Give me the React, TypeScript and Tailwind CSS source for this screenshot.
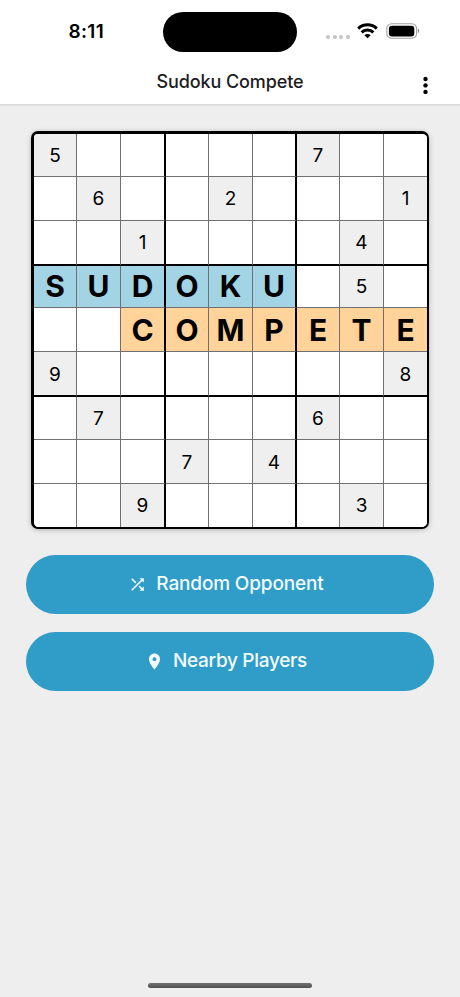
const ROWS = [
  '5.....7..',
  '.6..2...1',
  '..1....4.',
  'SUDOKU.5.',
  '..COMPETE',
  '9.......8',
  '.7....6..',
  '...7.4...',
  '..9....3.',
];

function Cell({ value, row, col }: { value: string; row: number; col: number }) {
  const isLetter = /[A-Z]/.test(value);
  const isDigit = /[0-9]/.test(value);
  const fill = isLetter ? (row === 3 ? 'bg-[#a2d4e5]' : 'bg-[#ffd399]') : isDigit ? 'bg-[#efefef]' : 'bg-white';
  const text = isLetter ? 'text-[30px] font-bold' : 'text-[19px]';
  const nudge = row === 3 && isLetter ? 'pb-[2px]' : row === 5 || row === 7 ? 'pt-[2px]' : '';
  const right =
    col === 8 ? '' : col % 3 === 2 ? 'border-r-2 border-r-black' : 'border-r border-r-[#707070]';
  const bottom =
    row === 8 ? '' : row % 3 === 2 ? 'border-b-2 border-b-black' : 'border-b border-b-[#707070]';
  return (
    <div className={`flex items-center justify-center leading-none text-black ${fill} ${text} ${nudge} ${right} ${bottom}`}>
      {value === '.' ? '' : <span>{value}</span>}
    </div>
  );
}

function StatusBar() {
  return (
    <div className="flex h-[63px] items-start">
      <div className="w-[163px] pt-[21px] pl-[68.5px] text-[19px] leading-[22px] font-semibold tracking-[0.3px] text-black">
        8:11
      </div>
      <div className="mt-[12px] h-[40px] w-[134px] rounded-full bg-black" />
      <div className="mt-[34.5px] ml-[29px] flex gap-[2.4px]">
        {[0, 1, 2, 3].map((n) => (
          <span key={n} className="size-[4.2px] rounded-full bg-[#c4c4c4]" />
        ))}
      </div>
      <svg className="mt-[23px] ml-[7px]" width="21" height="16" viewBox="0 0 21 16" fill="none" stroke="#000">
        <path d="M1.2 5.6C6.4.6 14.6.6 19.8 5.6" strokeWidth="3" />
        <path d="M4.6 9.3C7.9 6.2 13.1 6.2 16.4 9.3" strokeWidth="3" />
        <path d="M10.5 15.2L7.3 12.3C9.1 10.6 11.9 10.6 13.7 12.3Z" fill="#000" stroke="none" />
      </svg>
      <svg className="mt-[23px] ml-[8px]" width="34" height="16" viewBox="0 0 34 16">
        <rect x=".8" y=".7" width="29.8" height="14.6" rx="4.8" fill="none" stroke="#a2a2a2" strokeWidth="1.1" />
        <rect x="2.9" y="2.7" width="25.4" height="10.8" rx="3" />
        <path d="M31.9 5.5C33.6 6.3 33.6 9.5 31.9 10.3Z" fill="#8a8a8a" />
      </svg>
    </div>
  );
}

export default function App() {
  return (
    <div className="flex h-[997px] w-[460px] flex-col overflow-hidden bg-[#eeeeee] font-['Inter','Liberation_Sans',sans-serif]">
      <header className="h-[105px] shrink-0 border-b border-[#d9d9d9] bg-white shadow-[0_1px_1px_rgba(0,0,0,0.04)]">
        <StatusBar />
        <div className="grid h-[41px] grid-cols-[1fr_auto_1fr]">
          <h1 className="col-start-2 pt-[8px] text-[18px] leading-[22px] font-medium tracking-[-0.1px] text-[#1c1c1e]">
            Sudoku Compete
          </h1>
          <button aria-label="Menu" className="mt-[13px] mr-[31px] justify-self-end self-start">
            <svg className="block" width="7" height="20" viewBox="0 0 7 20">
              <circle cx="3.5" cy="3" r="2.2" />
              <circle cx="3.5" cy="9.4" r="2.2" />
              <circle cx="3.5" cy="15.9" r="2.2" />
            </svg>
          </button>
        </div>
      </header>

      <main className="flex flex-col items-center pt-[26px]">
        <div className="grid h-[398px] w-[398px] grid-cols-[43px_44px_45px_43px_44px_44px_43px_44px_43px] grid-rows-[43px_44px_45px_42px_44px_45px_43px_44px_43px] overflow-hidden rounded-[7px] border-t-3 border-r-2 border-b-2 border-l-3 border-black bg-white shadow-[0_1px_5px_rgba(0,0,0,0.25)]">
          {ROWS.flatMap((line, row) =>
            line.split('').map((value, col) => <Cell key={`${row}-${col}`} value={value} row={row} col={col} />),
          )}
        </div>

        <button className="mt-[25.5px] flex h-[59.5px] w-[408px] items-center justify-center rounded-full bg-[#2f9dc7] pr-[8px] text-[19px] font-medium tracking-[-0.15px] text-[#f2fbff]">
          <svg className="mr-[9px]" width="19" height="19" viewBox="0 0 24 24" fill="currentColor">
            <path d="M10.59 9.17L5.41 4 4 5.41l5.17 5.17 1.42-1.41zM14.5 4l2.04 2.04L4 18.59 5.41 20 17.96 7.46 20 9.5V4h-5.5zm.33 9.41l-1.41 1.41 3.13 3.13L14.5 20H20v-5.5l-2.04 2.04-3.13-3.13z" />
          </svg>
          <span>Random Opponent</span>
        </button>
        <button className="mt-[17.5px] flex h-[59.5px] w-[408px] items-center justify-center rounded-full bg-[#2f9dc7] pr-[8px] text-[19px] font-medium tracking-[-0.3px] text-[#f2fbff]">
          <svg className="mr-[9px]" width="19" height="19" viewBox="0 0 24 24" fill="currentColor">
            <path d="M12 2C8.13 2 5 5.13 5 9c0 5.25 7 13 7 13s7-7.75 7-13c0-3.87-3.13-7-7-7zm0 9.5a2.5 2.5 0 0 1 0-5 2.5 2.5 0 0 1 0 5z" />
          </svg>
          <span>Nearby Players</span>
        </button>
      </main>

      <div className="mx-auto mt-auto mb-[9px] h-[5px] w-[164px] rounded-full bg-linear-to-b from-[#707070] to-[#505050]" />
    </div>
  );
}
